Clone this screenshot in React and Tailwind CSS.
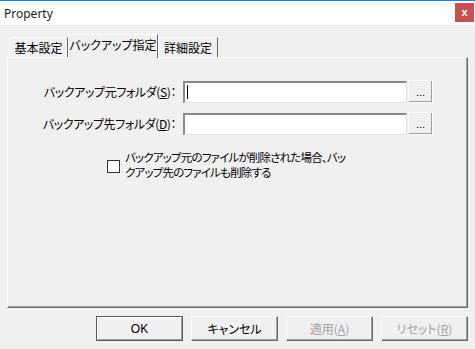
import React from 'react';

const jp = "font-['Meiryo_UI','Noto_Sans_CJK_JP',sans-serif] [font-feature-settings:'palt']";

const Tab = ({ label, active, width }) => (
  <div
    className={`${width} flex items-center justify-center border-t border-l border-white border-r border-r-[#696969] bg-[#f0f0f0] text-[12px] text-black ${
      active ? 'h-[24px] relative z-10 -mb-px pb-[3px]' : 'h-[20px]'
    }`}
  >
    {label}
  </div>
);

const BrowseButton = () => (
  <button
    type="button"
    className="w-[25px] h-[23px] ml-[1px] border-t border-l border-white border-r border-b border-[#696969] shadow-[inset_-1px_-1px_0_#a0a0a0] bg-[#f0f0f0] text-[11px] leading-none pt-[2px] text-black font-['Liberation_Sans',sans-serif]"
  >
    ...
  </button>
);

const FolderRow = ({ label, hotkey }) => (
  <div className="flex items-center h-[23px]">
    <div className="w-[170px] text-right text-[12px] tracking-[-0.4px] text-black whitespace-nowrap pr-[2px]">
      {label}(<span className="underline">{hotkey}</span>)：
    </div>
    <div className="ml-[5px] w-[224px] h-[22px] bg-white border-t-2 border-l-2 border-[#8a8a8a] border-r border-b border-r-[#e3e3e3] border-b-[#e3e3e3] flex items-center">
      {hotkey === 'S' && <div className="ml-[2px] w-px h-[14px] bg-black" />}
    </div>
    <BrowseButton />
  </div>
);

const DialogButton = ({ children, isDefault, disabled }) => (
  <button
    type="button"
    className={`w-[87px] h-[25px] bg-[#f0f0f0] text-[12px] ${
      disabled ? 'text-[#a3a3a3]' : 'text-black'
    } ${
      isDefault
        ? 'border border-[#5a5a5a] shadow-[inset_1px_1px_0_#fff,inset_-1px_-1px_0_#a0a0a0]'
        : 'border-t border-l border-white border-r border-b border-r-[#696969] border-b-[#696969] shadow-[inset_-1px_-1px_0_#a0a0a0]'
    }`}
  >
    {children}
  </button>
);

export default function App() {
  return (
    <div className={`w-[475px] h-[349px] bg-[#f0f0f0] flex flex-col overflow-hidden ${jp}`}>
      {/* title bar */}
      <div className="border-t border-[#1883d7] bg-white h-[25px] flex justify-between items-start">
        <span className="pl-[4px] pt-[4px] text-[12px] text-[#1a1a1a] font-['Noto_Sans',sans-serif]">Property</span>
        <div className="mt-[2px] mr-[1px] w-[19px] h-[19px] bg-[#c75050] flex items-center justify-center text-white text-[11px] font-bold font-['Liberation_Sans',sans-serif]">
          x
        </div>
      </div>

      <div className="px-[7px] pt-[8px]">
        {/* tabs */}
        <div className="flex items-end pl-[2px] h-[24px]">
          <Tab label="基本設定" width="w-[59px]" />
          <Tab label="バックアップ指定" width="w-[90px]" active />
          <Tab label="詳細設定" width="w-[60px]" />
        </div>

        {/* panel */}
        <div className="h-[251px] border-t border-l border-white border-r border-b border-r-[#696969] border-b-[#696969] shadow-[inset_-1px_-1px_0_#a0a0a0] pt-[22px]">
          <div className="flex flex-col gap-[9px]">
            <FolderRow label="バックアップ元フォルダ" hotkey="S" />
            <FolderRow label="バックアップ先フォルダ" hotkey="D" />
          </div>

          <div className="flex items-start mt-[15px] pl-[99px]">
            <div className="mt-[10px] w-[13px] h-[13px] bg-white border border-[#333]" />
            <div className="ml-[5px] text-[11.5px] tracking-[-0.8px] leading-[15px] text-black whitespace-nowrap">
              <div>バックアップ元のファイルが削除された場合、バッ</div>
              <div>クアップ先のファイルも削除する</div>
            </div>
          </div>
        </div>

        {/* buttons */}
        <div className="flex justify-end gap-[8px] mt-[8px]">
          <DialogButton isDefault>
            <span className="font-['Liberation_Sans',sans-serif]">OK</span>
          </DialogButton>
          <DialogButton>キャンセル</DialogButton>
          <DialogButton disabled>
            適用(<span className="underline">A</span>)
          </DialogButton>
          <DialogButton disabled>
            リセット(<span className="underline">R</span>)
          </DialogButton>
        </div>
      </div>
    </div>
  );
}
